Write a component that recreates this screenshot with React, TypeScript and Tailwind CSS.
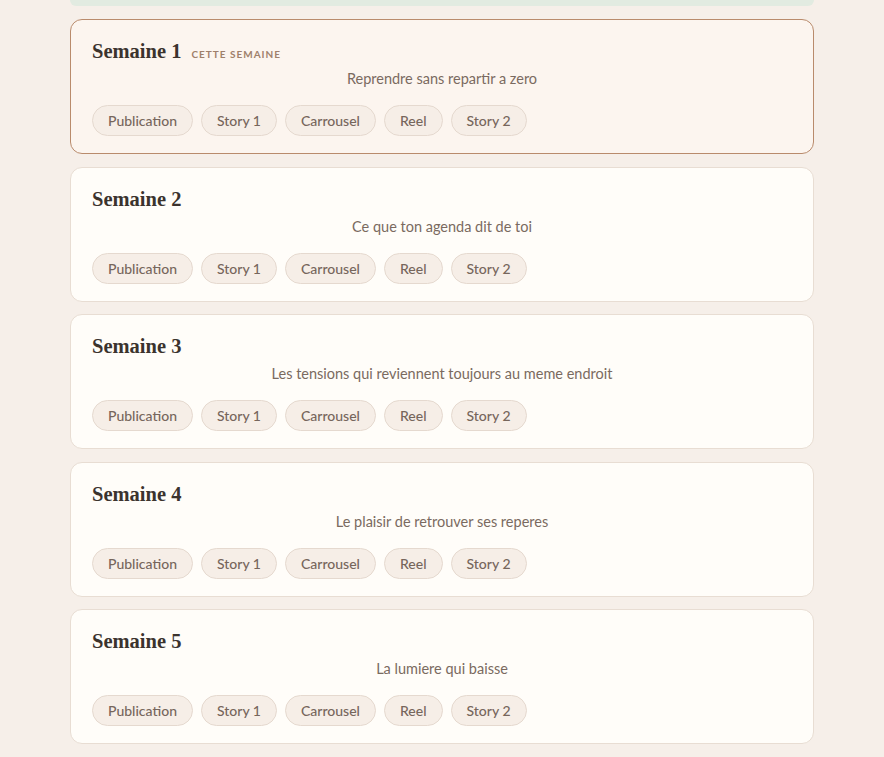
import React from "react";

const weeks = [
  { n: 1, title: "Reprendre sans repartir a zero", current: true },
  { n: 2, title: "Ce que ton agenda dit de toi" },
  { n: 3, title: "Les tensions qui reviennent toujours au meme endroit" },
  { n: 4, title: "Le plaisir de retrouver ses reperes" },
  { n: 5, title: "La lumiere qui baisse" },
];

const formats = ["Publication", "Story 1", "Carrousel", "Reel", "Story 2"];

function WeekCard({ n, title, current }: { n: number; title: string; current?: boolean }) {
  return (
    <div
      className={
        current
          ? "rounded-xl border border-[#b98b6c] bg-[#fcf5ef] px-[21px] pt-[17px] pb-[17px]"
          : "rounded-xl border border-[#e8ddd3] bg-[#fffdf9] px-[21px] pt-[17px] pb-[17px]"
      }
    >
      <div className="flex items-baseline gap-[10px]">
        <h2 className="text-[20.5px] leading-7 font-bold text-[#3b332e] font-['Liberation_Serif',serif]">
          Semaine {n}
        </h2>
        {current && (
          <span className="text-[10px] font-bold uppercase tracking-[0.1em] text-[#9f806b]">
            Cette semaine
          </span>
        )}
      </div>
      <p className="mt-1 text-center text-[14.5px] leading-5 text-[#7a6a60]">{title}</p>
      <div className="mt-4 flex gap-2">
        {formats.map((f) => (
          <span
            key={f}
            className="flex h-[31px] items-center rounded-full border border-[#e5d9cf] bg-[#f6eee7] px-[15px] text-[14px] font-medium text-[#76665c]"
          >
            {f}
          </span>
        ))}
      </div>
    </div>
  );
}

export default function App() {
  return (
    <div className="min-h-screen bg-[#f6efe9] font-['Lato','Noto_Sans',sans-serif]">
      <div className="mx-auto w-[744px]">
        <div className="h-[6px] rounded-b-xl bg-[#e2ebe1]" />
        <div className="mt-[13px] flex flex-col gap-[12.5px]">
          {weeks.map((w) => (
            <WeekCard key={w.n} {...w} />
          ))}
        </div>
      </div>
    </div>
  );
}
